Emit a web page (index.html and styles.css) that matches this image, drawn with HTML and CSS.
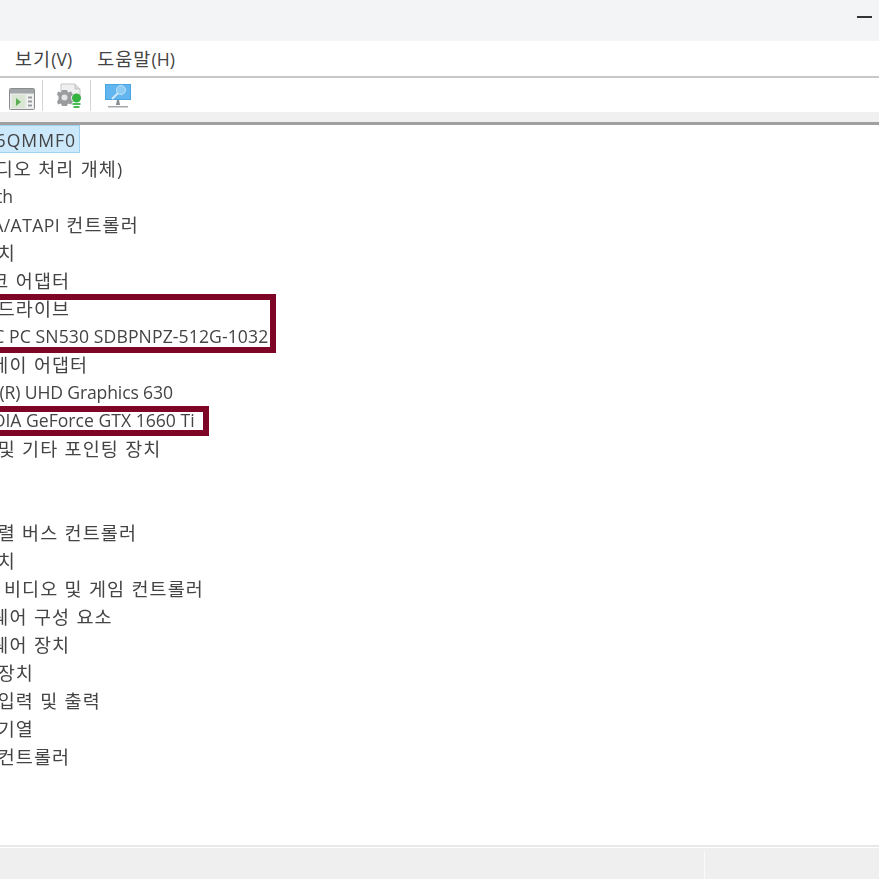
FILE: index.html
```
<!DOCTYPE html>
<html lang="ko">
<head>
<meta charset="utf-8">
<title>장치 관리자</title>
<link rel="stylesheet" href="styles.css">
</head>
<body>
<div class="window">
  <header class="titlebar"><span class="minimize"></span></header>
  <nav class="menubar">
    <span class="menu-item">보기<span class="lat">(V)</span></span>
    <span class="menu-item">도움말<span class="lat">(H)</span></span>
  </nav>
  <div class="toolbar">
    <svg class="tool tool-a" width="26" height="22" viewBox="0 0 26 22">
      <rect x="0.5" y="0.5" width="25" height="21" rx="1" fill="#e9ebea" stroke="#8a8c8d"/>
      <rect x="1" y="1" width="24" height="4.500" fill="#a3a6a8"/>
      <rect x="3" y="7" width="13" height="13" fill="#d9e6d2"/>
      <path d="M7 10l5 4-5 4z" fill="#5cae55"/>
      <rect x="18" y="7" width="6" height="13" fill="#f4f4f4"/>
      <path d="M19 9.500h4M19 13.500h4M19 17.500h4" stroke="#959a9d" stroke-width="2"/>
    </svg>
    <span class="tool-sep"></span>
    <svg class="tool tool-b" width="26" height="27" viewBox="0 0 26 27">
      <path d="M4 1h14l5 5v10H4z" fill="#f0f0f0" stroke="#c4c4c4"/>
      <path d="M18 1v5h5" fill="#dcdcdc" stroke="#c4c4c4"/>
      <path d="M5 7h5l1 2.500 3-1 2 3-2 2v3l2 2-2 3-3-1-1 2.500H5l-1-2.500-3 1-1-3 1.500-2v-3L0 11.500l1-3 3 1z" fill="#9a9c9e"/>
      <circle cx="7.500" cy="14.500" r="3" fill="#e4e4e4"/>
      <circle cx="19.500" cy="15" r="4.500" fill="#35b341"/>
      <path d="M15.500 20h8v2h-8zM16.500 23h6v2h-6z" fill="#4cbb55"/>
    </svg>
    <span class="tool-sep"></span>
    <svg class="tool tool-c" width="26" height="24" viewBox="0 0 26 24">
      <rect x="0" y="0" width="26" height="16" fill="#4aa5e4"/>
      <rect x="1" y="1" width="24" height="14" fill="#62b5ee"/>
      <circle cx="16" cy="6" r="4.500" fill="#8ecbf3" stroke="#bfe2f8"/>
      <path d="M13 9l-6 6" stroke="#cfe8f9" stroke-width="2"/>
      <path d="M12 16h2l1 5h-4z" fill="#8a8d90"/>
      <path d="M3 22h20v1.500H3z" fill="#a5a8aa"/>
    </svg>
  </div>
  <div class="band"></div>
  <main class="tree">
    <div class="row root"><span class="selected lat">DESKTOP-6QMMF0</span></div>
    <div class="row"><span class="lat">APO(</span>오디오 처리 개체<span class="lat">)</span></div>
    <div class="row lat bluetooth">Bluetooth</div>
    <div class="row"><span class="lat ide">IDE ATA/ATAPI</span> 컨트롤러</div>
    <div class="row">기타 장치</div>
    <div class="row">네트워크 어댑터</div>
    <div class="row">디스크 드라이브</div>
    <div class="row child lat wide">WDC PC SN530 SDBPNPZ-512G-1032</div>
    <div class="row">디스플레이 어댑터</div>
    <div class="row child lat narrow">Intel(R) UHD Graphics 630</div>
    <div class="row child lat">NVIDIA GeForce GTX 1660 Ti</div>
    <div class="row">마우스 및 기타 포인팅 장치</div>
    <div class="row">모니터</div>
    <div class="row">배터리</div>
    <div class="row">범용 직렬 버스 컨트롤러</div>
    <div class="row">보안 장치</div>
    <div class="row">사운드, 비디오 및 게임 컨트롤러</div>
    <div class="row">소프트웨어 구성 요소</div>
    <div class="row">소프트웨어 장치</div>
    <div class="row">시스템 장치</div>
    <div class="row">오디오 입력 및 출력</div>
    <div class="row">인쇄 대기열</div>
    <div class="row">저장소 컨트롤러</div>
    <div class="mark mark-disk"></div>
    <div class="mark mark-gpu"></div>
  </main>
  <footer class="statusbar">
    <span class="status-cell"></span>
    <span class="status-cell status-end"></span>
  </footer>
</div>
</body>
</html>
```
FILE: styles.css
```
* { box-sizing: border-box; }
html, body { margin: 0; height: 100%; }
body {
  overflow: hidden;
  background: #fff;
  color: #444;
  font-family: "Noto Sans CJK KR", "Open Sans", sans-serif;
  font-size: 18.5px;
  letter-spacing: 1.1px;
}
.lat {
  font-family: "Open Sans", "Noto Sans CJK KR", sans-serif;
  font-size: 17.6px;
  letter-spacing: 0;
}
.window {
  width: 879px;
  height: 879px;
  display: flex;
  flex-direction: column;
  overflow: hidden;
  filter: blur(0.4px);
}
.titlebar {
  height: 41px;
  flex: none;
  background: #f3f4f6;
  display: flex;
  justify-content: flex-end;
  align-items: flex-start;
  padding: 16px 7px 0 0;
}
.minimize {
  width: 15px;
  height: 2px;
  background: #333;
}
.menubar {
  height: 37px;
  flex: none;
  display: flex;
  gap: 25px;
  align-items: center;
  padding: 0 0 1px 15px;
  background: #fff;
  border-bottom: 2px solid #c8c8c8;
}
.menu-item { white-space: nowrap; }
.toolbar {
  height: 34px;
  flex: none;
  display: flex;
  align-items: center;
  padding-left: 9px;
  background: #fff;
}
.tool { flex: none; }
.tool-a { margin-top: 8px; }
.tool-b { margin-top: 3px; }
.tool-c { margin-top: 2px; }
.tool-sep {
  width: 1px;
  height: 31px;
  margin: 1px 14px 0 7px;
  background: #d4d4d4;
}
.band {
  height: 13px;
  flex: none;
  background: #f0f0f0;
  border-bottom: 3px solid #a0a0a0;
}
.tree {
  position: relative;
  flex: 1;
  margin-left: -63px;
  min-height: 0;
}
.row {
  height: 28px;
  line-height: 28px;
  white-space: nowrap;
}
.row:first-child { margin-bottom: 1px; }
.child { padding-left: 27px; }
.root { margin-left: -35px; letter-spacing: 0; }
.selected {
  display: inline-block;
  height: 28px;
  line-height: 29px;
  padding: 0 3px 0 2px;
  letter-spacing: 1px;
  background: #cce8fb;
  border: 1px solid #9fd0ee;
  vertical-align: top;
}
.bluetooth { margin-left: -5px; }
.ide { letter-spacing: 0.4px; }
.wide { letter-spacing: 0.1px; }
.narrow { letter-spacing: -0.15px; }
.mark {
  position: absolute;
  left: 0;
  border: 6px solid #7e0525;
  border-left: 0;
}
.mark-disk {
  top: 169px;
  width: 339px;
  height: 59px;
}
.mark-gpu {
  top: 281px;
  width: 272px;
  height: 30px;
}
.statusbar {
  height: 34px;
  flex: none;
  display: flex;
  background: #efefef;
  border-top: 2px solid #e8e8e8;
  box-shadow: inset 0 1px 0 #fff;
  padding-top: 5px;
}
.status-cell { width: 705px; border-right: 1px solid #fafafa; }
.status-end { width: auto; flex: 1; border: 0; }
```
